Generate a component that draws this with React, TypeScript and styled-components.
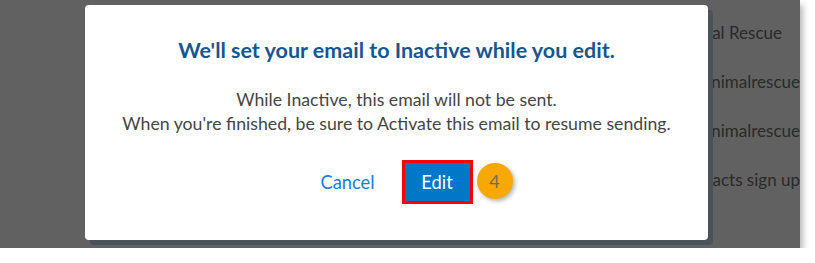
import React from "react";
import styled, { createGlobalStyle } from "styled-components";

const GlobalStyle = createGlobalStyle`
  html, body {
    margin: 0;
    padding: 0;
    background: #ffffff;
  }
  body {
    font-family: Lato, "Open Sans", Arial, sans-serif;
  }
`;

const Backdrop = styled.div`
  position: relative;
  width: 800px;
  height: 248px;
  background: #616161;
  box-shadow: 3px 5px 6px rgba(0, 0, 0, 0.28);
  overflow: hidden;
`;

const PageColumn = styled.div`
  display: flex;
  flex-direction: column;
  align-items: flex-end;
  gap: 27px;
  padding-top: 22px;
`;

const PageLine = styled.div<{ $trail?: number }>`
  font-size: 17px;
  line-height: 22px;
  color: #2a2a2a;
  white-space: nowrap;
  padding-right: ${(p) => p.$trail ?? 0}px;
`;

const Modal = styled.div`
  position: absolute;
  left: 85px;
  top: 5px;
  width: 623px;
  height: 235px;
  box-sizing: border-box;
  background: #ffffff;
  border-radius: 4px;
  box-shadow: 5px 5px 0 #4b535a;
  display: flex;
  flex-direction: column;
  align-items: center;
  padding-top: 31px;
`;

const Title = styled.h2`
  margin: 0;
  font-size: 21.5px;
  line-height: 28px;
  font-weight: 700;
  color: #17568f;
`;

const Body = styled.p`
  margin: 24px 0 0;
  font-size: 17.7px;
  line-height: 24px;
  color: #454545;
  text-align: center;
`;

const Actions = styled.div`
  display: flex;
  align-items: center;
  gap: 27px;
  margin-top: 24px;
`;

const CancelButton = styled.button`
  border: 0;
  background: none;
  padding: 0;
  font-family: inherit;
  font-size: 18.3px;
  color: #1580d2;
  cursor: pointer;
`;

const EditWrap = styled.div`
  position: relative;
`;

const EditButton = styled.button`
  width: 71px;
  height: 44px;
  box-sizing: border-box;
  border: 3px solid #ff0000;
  background: #0077c7;
  color: #ffffff;
  font-family: inherit;
  font-size: 18.3px;
  padding: 0;
  cursor: pointer;
`;

const StepBadge = styled.span`
  position: absolute;
  left: 75px;
  top: 3px;
  width: 36px;
  height: 36px;
  border-radius: 50%;
  background: #f9a800;
  box-shadow: 2px 2px 4px rgba(0, 0, 0, 0.3);
  display: flex;
  align-items: center;
  justify-content: center;
  font-size: 18px;
  color: #7a6a55;
`;

export default function App() {
  return (
    <>
      <GlobalStyle />
      <Backdrop>
        <PageColumn>
          <PageLine $trail={18}>Animal Rescue</PageLine>
          <PageLine>animalrescue</PageLine>
          <PageLine>animalrescue</PageLine>
          <PageLine>contacts sign up</PageLine>
        </PageColumn>
        <Modal>
          <Title>We'll set your email to Inactive while you edit.</Title>
          <Body>
            While Inactive, this email will not be sent.
            <br />
            When you're finished, be sure to Activate this email to resume sending.
          </Body>
          <Actions>
            <CancelButton>Cancel</CancelButton>
            <EditWrap>
              <EditButton>Edit</EditButton>
              <StepBadge>4</StepBadge>
            </EditWrap>
          </Actions>
        </Modal>
      </Backdrop>
    </>
  );
}
